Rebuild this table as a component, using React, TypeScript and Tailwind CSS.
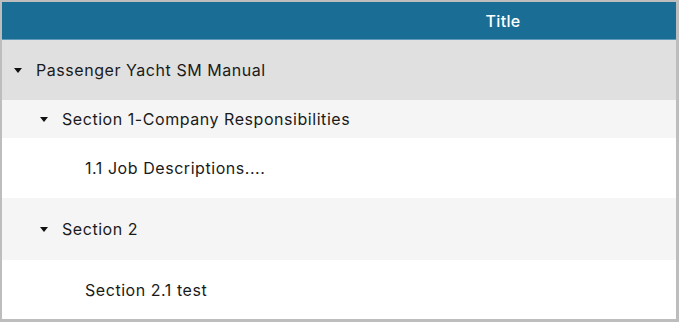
import React from 'react';

type Node = {
  id: string;
  title: string;
  level: number;
  expandable?: boolean;
  bg: string;
  height: string;
};

// flattened tree rows, in display order
const rows: Node[] = [
  { id: 'm1', title: 'Passenger Yacht SM Manual', level: 0, expandable: true, bg: 'bg-[#e0e0e0]', height: 'h-[60px]' },
  { id: 's1', title: 'Section 1-Company Responsibilities', level: 1, expandable: true, bg: 'bg-[#f5f5f5]', height: 'h-[38px]' },
  { id: 's1-1', title: '1.1 Job Descriptions....', level: 2, bg: 'bg-white', height: 'h-[60px]' },
  { id: 's2', title: 'Section 2', level: 1, expandable: true, bg: 'bg-[#f5f5f5]', height: 'h-[62px]' },
  { id: 's2-1', title: 'Section 2.1 test', level: 2, bg: 'bg-white', height: 'h-[60px]' },
];

const indent: Record<number, string> = {
  0: 'pl-[12px]',
  1: 'pl-[38px]',
  2: 'pl-[83px]',
};

const Caret = () => (
  <svg width="8" height="5" viewBox="0 0 8 5" className="mr-[14px] shrink-0">
    <path d="M0 0 H8 L4 5 Z" fill="#111" />
  </svg>
);

const TreeRow = ({ node }: { node: Node }) => (
  <div className={`flex items-center ${node.height} ${node.bg} ${indent[node.level]}`}>
    {node.expandable && <Caret />}
    <span className="text-[16px] text-[#1a1a1a] tracking-[0.55px] whitespace-nowrap">{node.title}</span>
  </div>
);

export default function App() {
  return (
    <div className="w-[679px] h-[322px] bg-white font-['Inter',sans-serif]">
      <div className="w-full h-full border-l-2 border-t-2 border-r-[3px] border-b-[3px] border-[#bdbdbd] overflow-hidden">
        <div className="flex h-[38px] bg-[#1a6e96] border-b border-[#5f9bb8]">
          <div className="flex-1" />
          <div className="flex-1 flex items-center justify-center pr-[6px]">
            <span className="text-white text-[16px] font-medium tracking-[0.3px]">Title</span>
          </div>
        </div>
        {rows.map((r) => (
          <TreeRow key={r.id} node={r} />
        ))}
      </div>
    </div>
  );
}
